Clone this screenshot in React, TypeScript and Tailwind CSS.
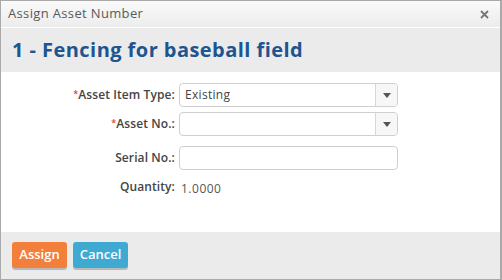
import React from 'react';

const Caret: React.FC = () => (
  <svg width="8" height="5" viewBox="0 0 8 5">
    <path d="M0 0 L8 0 L4 5 Z" fill="#555" />
  </svg>
);

interface RowProps {
  label: string;
  required?: boolean;
  children: React.ReactNode;
  className?: string;
}

const Row: React.FC<RowProps> = ({ label, required, children, className = '' }) => (
  <div className={`flex items-center ${className}`}>
    <div className="w-[174px] text-right text-[12px] font-semibold text-[#454545] leading-none tracking-[0.1px]">
      {required && <span className="text-[#e2403a] text-[9px] align-top">*</span>}
      {label}
    </div>
    <div className="ml-[4px] w-[219px]">{children}</div>
  </div>
);

const Select: React.FC<{ value?: string }> = ({ value }) => (
  <div className="h-[24px] border border-[#cfcfcf] rounded-[4px] flex bg-white overflow-hidden">
    <div className="flex-1 px-[5px] flex items-center text-[12px] text-[#444] tracking-[0.3px]">{value}</div>
    <div className="w-[22px] border-l border-[#d6d6d6] bg-[#f7f7f7] flex items-center justify-center">
      <Caret />
    </div>
  </div>
);

export default function App() {
  return (
    <div className="w-[502px] h-[280px] border border-[#a9a9a9] border-r-2 flex flex-col font-['Open_Sans',sans-serif] bg-white">
      <div className="h-[27px] shrink-0 bg-gradient-to-b from-[#fafafa] to-[#ececec] border-b border-white flex items-center justify-between pl-[7px] pr-[11px]">
        <span className="text-[13px] text-[#5a5a5a] tracking-[0.35px]">Assign Asset Number</span>
        <svg width="9" height="9" viewBox="0 0 9 9">
          <path d="M1 1 L8 8 M8 1 L1 8" stroke="#777" strokeWidth="1.8" />
        </svg>
      </div>
      <div className="h-[44px] shrink-0 bg-[#ebebeb] flex items-center pl-[11px]">
        <h1 className="text-[20px] font-bold text-[#1e5490] tracking-[0.45px]">1 - Fencing for baseball field</h1>
      </div>
      <div className="flex-1 pt-[11px]">
        <Row label="Asset Item Type:" required>
          <Select value="Existing" />
        </Row>
        <Row label="Asset No.:" required className="mt-[5px]">
          <Select />
        </Row>
        <Row label="Serial No.:" className="mt-[10px]">
          <div className="h-[24px] border border-[#cfcfcf] rounded-[4px] bg-white" />
        </Row>
        <Row label="Quantity:" className="mt-[8px] h-[18px]">
          <span className="pl-[2px] text-[12px] text-[#555] tracking-[0.5px]">1.0000</span>
        </Row>
      </div>
      <div className="h-[47px] shrink-0 bg-[#ebebeb] flex gap-[6px] pl-[11px] pt-[10px]">
        <button className="w-[55px] h-[26px] rounded-[3px] bg-[#f3803a] text-white text-[13px] font-semibold shadow-[0_2px_0_#b9b9b9]">
          Assign
        </button>
        <button className="w-[55px] h-[26px] rounded-[3px] bg-[#3eaad2] text-white text-[13px] font-semibold shadow-[0_2px_0_#b9b9b9]">
          Cancel
        </button>
      </div>
    </div>
  );
}
